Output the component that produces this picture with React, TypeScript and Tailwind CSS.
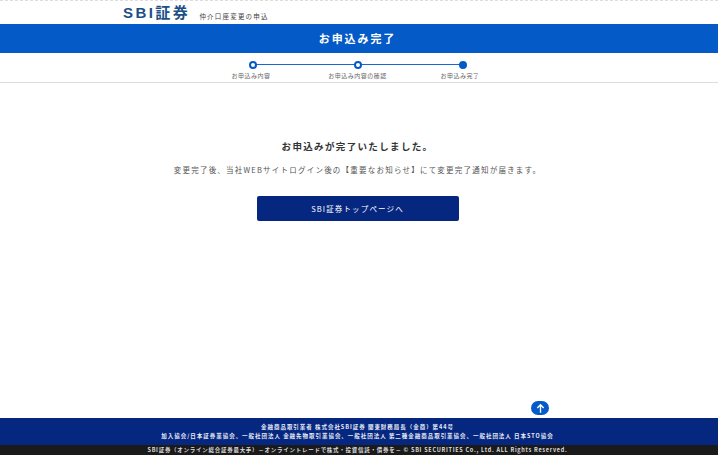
const jp = { fontFamily: '"Noto Sans CJK JP", "Liberation Sans", sans-serif' };

function Step({ label, active, shift }: { label: string; active?: boolean; shift: string }) {
  return (
    <div className="flex w-[105px] flex-col items-center">
      <div className={`z-10 h-[8px] w-[8px] rounded-full border-2 border-[#045ac6] ${active ? "bg-[#045ac6]" : "bg-white"}`} />
      <div className={`mt-[3px] text-[6px] leading-[8px] tracking-[0.5px] whitespace-nowrap text-[#666] ${shift}`}>{label}</div>
    </div>
  );
}

export default function App() {
  return (
    <div className="flex h-[455px] w-[718px] flex-col overflow-hidden bg-white" style={jp}>
      <header className="flex h-[24px] items-end border-t border-dashed border-[#ddd] pl-[123px]">
        <div className="mb-[2px] text-[15px] leading-[18px] font-bold text-[#1c4f86]">
          <span className="tracking-[2.4px]" style={{ fontFamily: '"Liberation Sans", sans-serif' }}>SBI</span>
          <span className="tracking-[2.6px]">証券</span>
        </div>
        <div className="mb-[3px] ml-[9px] text-[6.5px] leading-[10px] tracking-[1.2px] text-[#444]">仲介口座変更の申込</div>
      </header>
      <div className="flex h-[29px] items-center justify-center bg-[#045ac6] pr-[3px] text-[11px] font-bold tracking-[1.9px] text-white">
        お申込み完了
      </div>
      <nav className="relative flex h-[30px] justify-center border-b border-[#ddd] pt-[8px] pr-[3px]">
        <div className="absolute top-[11px] left-[252px] h-px w-[210px] bg-[#1a68cc]" />
        <Step label="お申込み内容" shift="-ml-[3px]" />
        <Step label="お申込み内容の確認" shift="" />
        <Step label="お申込み完了" active shift="-ml-[5px]" />
      </nav>
      <main className="relative flex flex-1 flex-col items-center pt-[56px] pr-[3px]">
        <h1 className="text-[9.5px] leading-[14px] font-bold tracking-[1.35px] text-[#333]">お申込みが完了いたしました。</h1>
        <p className="mt-[11px] text-[7.5px] leading-[12px] tracking-[1.22px] whitespace-nowrap text-[#555]">
          変更完了後、当社WEBサイトログイン後の【重要なお知らせ】にて変更完了通知が届きます。
        </p>
        <button className="mt-[20px] flex h-[25px] w-[202px] items-center justify-center rounded-[2px] bg-[#06277f] text-[7.5px] tracking-[1.15px] text-white">
          SBI証券トップページへ
        </button>
        <button className="absolute right-[169px] bottom-[3px] flex h-[14px] w-[18px] items-center justify-center rounded-full bg-[#045ac6]">
          <svg width="11" height="11" viewBox="0 0 24 24" fill="none" stroke="white" strokeWidth="3">
            <path d="M12 21V4M5 11l7-7 7 7" />
          </svg>
        </button>
      </main>
      <footer className="flex h-[27px] flex-col items-center justify-center bg-[#06277f] pr-[3px] text-[5.5px] leading-[8.5px] font-bold tracking-[0.97px] whitespace-nowrap text-[#e6ebf7]">
        <div>金融商品取引業者 株式会社SBI証券 関東財務局長（金商）第44号</div>
        <div>加入協会/日本証券業協会、一般社団法人 金融先物取引業協会、一般社団法人 第二種金融商品取引業協会、一般社団法人 日本STO協会</div>
      </footer>
      <div className="flex h-[10px] items-center justify-center bg-[#1a1a1a] pr-[3px] text-[5.5px] font-bold tracking-[0.73px] whitespace-nowrap text-[#ddd]">
        SBI証券（オンライン総合証券最大手）－オンライントレードで株式・投資信託・債券を－ © SBI SECURITIES Co., Ltd. ALL Rights Reserved.
      </div>
    </div>
  );
}
